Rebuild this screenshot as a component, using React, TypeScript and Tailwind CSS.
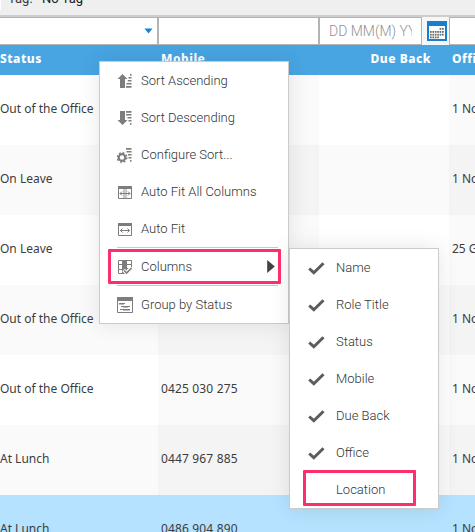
import type { ReactNode } from "react";

const G = "#7d7d7d";

const rows = [
  { status: "Out of the Office", mobile: "", office: "1 November" },
  { status: "On Leave", mobile: "", office: "1 November" },
  { status: "On Leave", mobile: "", office: "25 Grenfell" },
  { status: "Out of the Office", mobile: "", office: "1 November" },
  { status: "Out of the Office", mobile: "0425 030 275", office: "1 November" },
  { status: "At Lunch", mobile: "0447 967 885", office: "1 November" },
  { status: "At Lunch", mobile: "0486 904 890", office: "1 November", selected: true },
];

function Icon({ children }: { children: ReactNode }) {
  return (
    <svg width="18" height="19" viewBox="0 -1 18 19" fill={G} className="shrink-0">
      {children}
    </svg>
  );
}

const SortAsc = () => (
  <Icon>
    <path d="M5.500 2 10.500 7H8v9H3V7H.5z" />
    <path d="M13 2h1.500v1.700H13zM11.500 5h3v1.600h-3zM10.800 8h3.700v1.600h-3.700zM9.500 11h5v1.600h-5zM9 14h5.500v1.800H9z" />
  </Icon>
);
const SortDesc = () => (
  <Icon>
    <path d="M3 2h5v9h2.500l-5 5-5-5H3z" />
    <path d="M9 2h5.500v1.700H9zM9 5h5.500v1.600H9zM10.500 8h4v1.600h-4zM11.500 11h3v1.600h-3zM13 14h1.500v1.700H13z" />
  </Icon>
);
const Gear = () => (
  <Icon>
    <circle cx="5" cy="11.500" r="3.300" fill="none" stroke={G} strokeWidth="2.200" />
    <circle cx="5" cy="11.500" r="4.800" fill="none" stroke={G} strokeWidth="1.400" strokeDasharray="1.9 1.87" />
    <path d="M9 2h5.500v1.700H9zM9.500 5h5v1.600h-5zM11 8h3.500v1.600H11zM11.500 11h3v1.600h-3zM13 14h1.500v1.700H13z" />
  </Icon>
);
const FitAll = () => (
  <Icon>
    <path d="M1 3h14v3H1z" />
    <path d="M6 6h4v9H6z" fill="#c9c9c9" />
    <path d="M1.500 5v10.500h13V5M3 10.500h10M5 8.500l-2 2 2 2M11 8.500l2 2-2 2" fill="none" stroke={G} />
  </Icon>
);
const Fit = () => (
  <Icon>
    <path d="M1 3h14v3H1z" />
    <path d="M1.500 5v10.500h13V5M3.500 10.500h9M5.500 8.500l-2 2 2 2M10.500 8.500l2 2-2 2" fill="none" stroke={G} />
  </Icon>
);
const Columns = () => (
  <Icon>
    <path d="M5 2h5v14H5z" />
    <path d="M1.500 2.500h13v7M1.500 2.500v13H9M1.500 6.500H5M1.500 11.500H5M10 6.500h4.500M10 10.500h2" fill="none" stroke={G} />
    <path d="m6.500 12 3 3 5-5.500" fill="none" stroke="#fff" strokeWidth="3.500" />
    <path d="m7 12.300 2.600 2.700 5-5" fill="none" stroke={G} strokeWidth="1.600" />
  </Icon>
);
const Group = () => (
  <Icon>
    <path d="M0 1h16v4H0z" />
    <path d="M.5 4v12.500h15V4M2 7.500h6M4 10.500h9M3 13.500h10" fill="none" stroke={G} />
    <path d="M2 7h5v1.500H2zM6 10h5v1.500H6zM6 13h7v1.500H6z" />
  </Icon>
);

function MenuItem({ icon, label, arrow }: { icon: ReactNode; label: string; arrow?: boolean }) {
  return (
    <div className="flex h-[37px] items-center pl-[17px] pr-[13px]">
      {icon}
      <span className="ml-[6px] grow">{label}</span>
      {arrow && (
        <svg width="8" height="13" viewBox="0 0 8 13" className="shrink-0">
          <path d="M.2 0 7.800 6.500.2 13z" fill="#424242" />
        </svg>
      )}
    </div>
  );
}

const Separator = () => <div className="ml-[17px] mr-[10px] h-px bg-[#cacaca]" />;

// Column range and height of each row of day dots in the calendar button.
const dayRows = [
  { y: 7, from: 4, to: 6 },
  { y: 10, from: 0, to: 6 },
  { y: 12.800, from: 0, to: 6 },
  { y: 15.500, from: 0, to: 4 },
];

export default function App() {
  return (
    <div className="relative flex h-[532px] w-[475px] flex-col overflow-hidden bg-white font-['Noto_Sans',sans-serif] text-[12px] text-[#3c3c3c]">
      <div className="flex h-[15px] shrink-0 bg-[#efefef] font-['Roboto',sans-serif] text-[13px] leading-[15px]">
        <div className="h-[10px] w-px bg-white" />
        <span className="-mt-[9px] ml-[7px] w-[34px]">Tag:</span>
        <span className="-mt-[9px] text-[#222]">No Tag</span>
      </div>

      <div className="flex h-[30px] shrink-0 border-t-2 border-[#cecece] bg-[#f6f6f6]">
        <div className="flex w-[158px] items-center justify-end border-b border-r border-t border-[#b3b3b3] bg-white pr-[4px]">
          <svg width="9" height="6" viewBox="0 0 9 6">
            <path d="M.5.5h8l-4 5z" fill="#1d80d0" />
          </svg>
        </div>
        <div className="w-[161px] border border-[#b3b3b3] bg-white" />
        <div className="flex w-[103px] items-center overflow-hidden border border-[#b3b3b3] bg-white pl-[9px]">
          <span className="w-[83px] overflow-hidden whitespace-nowrap font-['Roboto',sans-serif] text-[14px] font-light text-[#929292]">
            DD MM(M) YYYY
          </span>
        </div>
        <div className="flex w-[27px] items-center pl-[5px]">
          <svg width="20" height="20" viewBox="0 0 20 20">
            <path d="M0 0h20v20H0z" fill="#167fd0" />
            <path d="M2 5h16v13H2z" fill="#fff" />
            {dayRows.map(({ y, from, to }, r) =>
              [0, 1, 2, 3, 4, 5].slice(from, to).map((c) => (
                <rect
                  key={`${r}-${c}`}
                  x={3 + c * 2.400}
                  y={y}
                  width="1.700"
                  height="1.800"
                  fill={r === 1 && c === 4 ? "#167fd0" : "#6a6a6a"}
                />
              ))
            )}
          </svg>
        </div>
        <div className="grow border-b border-l border-t border-[#b3b3b3] bg-white" />
      </div>

      <div className="flex h-[30px] shrink-0 bg-[#48a5e2] pt-[5px] text-[12px] font-extrabold leading-[17px] tracking-[0.5px] text-white">
        <div className="w-[161px]">Status</div>
        <div className="w-[158px]">Mobile</div>
        <div className="w-[112px] text-right">Due Back</div>
        <div className="ml-[21px] w-[23px] overflow-hidden">Office</div>
      </div>

      {rows.map((row, i) => {
        const light = row.selected ? "bg-[#b5e2ff]" : i % 2 ? "bg-[#fafafa]" : "bg-white";
        const dark = row.selected ? "bg-[#b5e2ff]" : i % 2 ? "bg-[#f4f4f4]" : "bg-[#fafafa]";
        return (
          <div key={i} className="flex h-[70px] shrink-0 whitespace-nowrap leading-[68px]">
            <div className={`w-[158px] ${light}`}>{row.status}</div>
            <div className={`w-[161px] pl-[3px] tracking-[0.15px] ${dark}`}>{row.mobile}</div>
            <div className={`w-[130px] ${light}`} />
            <div className={`w-[26px] overflow-hidden pl-[3px] ${dark}`}>{row.office}</div>
          </div>
        );
      })}

      <div className="absolute left-[99px] top-[61px] w-[190px] border border-[#cbcbcb] bg-white font-['Roboto',sans-serif] text-[13px] font-light text-[#333] shadow-[0_0_20px_rgba(0,0,0,0.10)]">
        <MenuItem icon={<SortAsc />} label="Sort Ascending" />
        <MenuItem icon={<SortDesc />} label="Sort Descending" />
        <MenuItem icon={<Gear />} label="Configure Sort..." />
        <MenuItem icon={<FitAll />} label="Auto Fit All Columns" />
        <MenuItem icon={<Fit />} label="Auto Fit" />
        <Separator />
        <MenuItem icon={<Columns />} label="Columns" arrow />
        <Separator />
        <MenuItem icon={<Group />} label="Group by Status" />
      </div>

      <div className="absolute left-[289px] top-[248px] w-[150px] border border-[#cbcbcb] bg-white font-['Roboto',sans-serif] text-[13px] font-light text-[#333] shadow-[0_0_20px_rgba(0,0,0,0.10)]">
        {["Name", "Role Title", "Status", "Mobile", "Due Back", "Office", "Location"].map((label) => (
          <div key={label} className="flex h-[37px] items-center pl-[18px]">
            <svg width="17" height="14" viewBox="0 0 17 14">
              {label !== "Location" && <path d="m1.200 7.500 4.600 4.200L15.500 2.200" fill="none" stroke="#5c5c5c" strokeWidth="3" />}
            </svg>
            <span className="ml-[11px]">{label}</span>
          </div>
        ))}
      </div>

      <div className="absolute left-[108px] top-[249px] h-[35px] w-[173px] rounded-[1px] border-[3px] border-[#fb2f6b]" />
      <div className="absolute left-[303px] top-[470px] h-[36px] w-[113px] rounded-[1px] border-[3px] border-[#fb2f6b]" />
    </div>
  );
}
